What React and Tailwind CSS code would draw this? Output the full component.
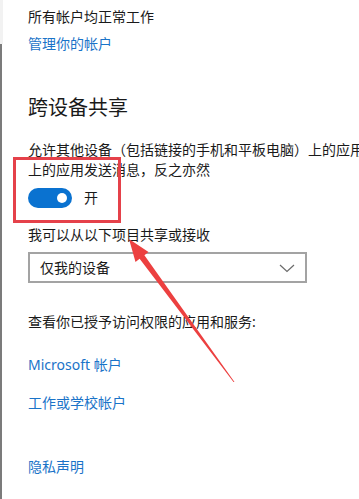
import React from "react";

export default function App() {
  return (
    <div className="relative w-[359px] h-[499px] overflow-hidden bg-white font-['Noto_Sans','Noto_Sans_CJK_SC',sans-serif] text-[#1a1a1a]">
      <div className="flex h-full">
        <div className="flex flex-col w-[3px] shrink-0">
          <div className="h-[44px] bg-[#f2f2f2]" />
          <div className="flex-1 w-[2px] bg-[#7b7b7b]" />
        </div>
        <div className="flex flex-col pl-[25px] text-[14px] leading-[20px] whitespace-nowrap">
          <div className="mt-[7px]">所有帐户均正常工作</div>
          <div className="mt-[7px] text-[#1a73c8]">管理你的帐户</div>
          <div className="mt-[40px] text-[20px] leading-[28px]">跨设备共享</div>
          <div className="mt-[18px]">允许其他设备（包括链接的手机和平板电脑）上的应用</div>
          <div>上的应用发送消息，反之亦然</div>
          <div className="mt-[8px] flex items-center gap-[12px]">
            <div className="w-[44px] h-[20px] rounded-full bg-[#0a72d0] flex items-center justify-end pr-[5px]">
              <div className="w-[10px] h-[10px] rounded-full bg-white" />
            </div>
            <span>开</span>
          </div>
          <div className="mt-[17px]">我可以从以下项目共享或接收</div>
          <div className="mt-[7px] w-[279px] h-[31px] border-2 border-[#a3a3a3] flex items-center justify-between pl-[10px] pr-[10px]">
            <span>仅我的设备</span>
            <svg width="16" height="10" viewBox="0 0 16 10" fill="none" stroke="#6b6b6b" strokeWidth="1.2">
              <path d="M1 2 L8 8.5 L15 2" />
            </svg>
          </div>
          <div className="mt-[29px]">查看你已授予访问权限的应用和服务:</div>
          <div className="mt-[23px] text-[#1a73c8]">Microsoft 帐户</div>
          <div className="mt-[18px] text-[#1a73c8]">工作或学校帐户</div>
          <div className="mt-[44px] text-[#1a73c8]">隐私声明</div>
        </div>
      </div>

      <div className="absolute left-[13px] top-[157px] w-[108px] h-[66px] border-[3px] border-[#e5414a] pointer-events-none" />

      <svg className="absolute left-0 top-0 pointer-events-none" width="359" height="499" viewBox="0 0 359 499">
        <polygon
          points="129,239 148.5,252 144.4,255.2 234.5,382 233.5,382 139.6,258.8 135.5,262"
          fill="#ec4040"
        />
      </svg>
    </div>
  );
}
